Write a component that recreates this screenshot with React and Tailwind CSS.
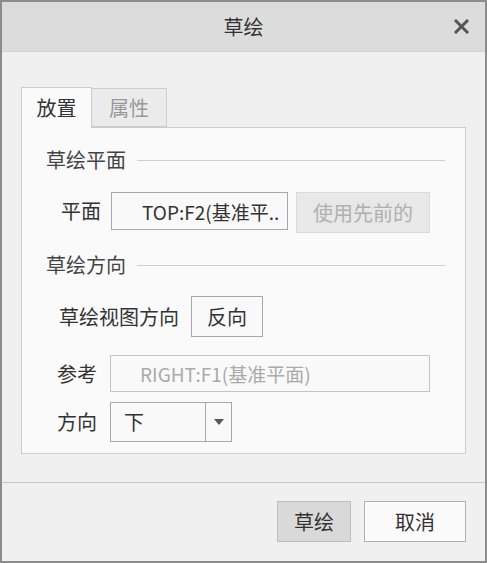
import React from "react";

const font = "font-['Noto_Sans_CJK_SC',sans-serif]";

function SectionHeading({ title }) {
    return (
        <div className="flex items-center h-[24px]">
            <span className="text-[20px] leading-none text-[#444]">{title}</span>
            <div className="flex-1 ml-[11px] h-px bg-[#cfcfcf]" />
        </div>
    );
}

export default function App() {
    return (
        <div
            className={`${font} w-[487px] h-[563px] border-2 border-[#8c8c8c] bg-[#f0f0f0] flex flex-col`}
        >
            {/* title bar */}
            <div className="h-[50px] bg-[#dcdcdc] grid grid-cols-[1fr_auto_1fr] items-center border-b border-[#d2d2d2]">
                <div />
                <span className="text-[20px] leading-none text-[#333]">草绘</span>
                <div className="flex justify-end pr-[16px]">
                    <svg width="15" height="15" viewBox="0 0 15 15">
                        <path
                            d="M2 2 L13 13 M13 2 L2 13"
                            stroke="#555"
                            strokeWidth="3"
                            strokeLinecap="square"
                        />
                    </svg>
                </div>
            </div>

            {/* body */}
            <div className="px-[19px] pt-[35px]">
                <div className="flex items-end">
                    <div className="w-[71px] h-[41px] bg-[#fafafa] border border-b-0 border-[#cdcdcd] flex items-center justify-center text-[20px] leading-none text-[#333] -mb-px relative z-10">
                        放置
                    </div>
                    <div className="w-[75px] h-[39px] bg-[#ebebeb] border border-l-0 border-[#cdcdcd] flex items-center justify-center text-[20px] leading-none text-[#999]">
                        属性
                    </div>
                </div>

                <div className="h-[327px] bg-[#fafafa] border border-[#cdcdcd] pl-[24px] pr-[20px] pt-[20px]">
                    <SectionHeading title="草绘平面" />

                    <div className="flex items-start mt-[20px]">
                        <span className="ml-[15px] w-[50px] h-[38px] flex items-center text-[20px] leading-none text-[#333]">
                            平面
                        </span>
                        <div className="w-[177px] h-[38px] border border-[#a8a8a8] bg-[#f9f9f9] flex items-center pl-[30px] text-[19px] leading-none text-[#333] whitespace-nowrap overflow-hidden">
                            TOP:F2(基准平..
                        </div>
                        <div className="ml-[8px] w-[134px] h-[41px] border border-[#dadada] bg-[#e8e8e8] flex items-center justify-center text-[20px] leading-none text-[#b0b0b0]">
                            使用先前的
                        </div>
                    </div>

                    <div className="mt-[20px]">
                        <SectionHeading title="草绘方向" />
                    </div>

                    <div className="flex items-center mt-[19px]">
                        <span className="ml-[13px] text-[20px] leading-none text-[#333]">草绘视图方向</span>
                        <div className="ml-[12px] w-[72px] h-[41px] border border-[#a8a8a8] bg-[#f9f9f9] flex items-center justify-center text-[20px] leading-none text-[#333]">
                            反向
                        </div>
                    </div>

                    <div className="flex items-center mt-[18px]">
                        <span className="ml-[11px] w-[53px] text-[20px] leading-none text-[#333]">参考</span>
                        <div className="w-[320px] h-[37px] border border-[#c4c4c4] bg-[#f9f9f9] flex items-center pl-[29px] text-[19px] leading-none text-[#aaa] whitespace-nowrap">
                            RIGHT:F1(基准平面)
                        </div>
                    </div>

                    <div className="flex items-center mt-[10px]">
                        <span className="ml-[11px] w-[53px] text-[20px] leading-none text-[#333]">方向</span>
                        <div className="w-[122px] h-[40px] border border-[#a8a8a8] bg-[#f9f9f9] flex">
                            <div className="flex-1 flex items-center pl-[13px] text-[20px] leading-none text-[#333]">
                                下
                            </div>
                            <div className="w-[26px] border-l border-[#a8a8a8] flex items-center justify-center">
                                <svg width="10" height="6" viewBox="0 0 10 6">
                                    <path d="M0 0 L10 0 L5 6 Z" fill="#555" />
                                </svg>
                            </div>
                        </div>
                    </div>
                </div>
            </div>

            {/* footer */}
            <div className="mt-[28px] h-px bg-[#c8c8c8]" />
            <div className="flex justify-end gap-[13px] pr-[19px] pt-[18px]">
                <div className="w-[74px] h-[41px] bg-[#d9d9d9] border border-[#bdbdbd] flex items-center justify-center text-[20px] leading-none text-[#333]">
                    草绘
                </div>
                <div className="w-[102px] h-[41px] bg-[#fbfbfb] border border-[#b0b0b0] flex items-center justify-center text-[20px] leading-none text-[#333]">
                    取消
                </div>
            </div>
        </div>
    );
}
